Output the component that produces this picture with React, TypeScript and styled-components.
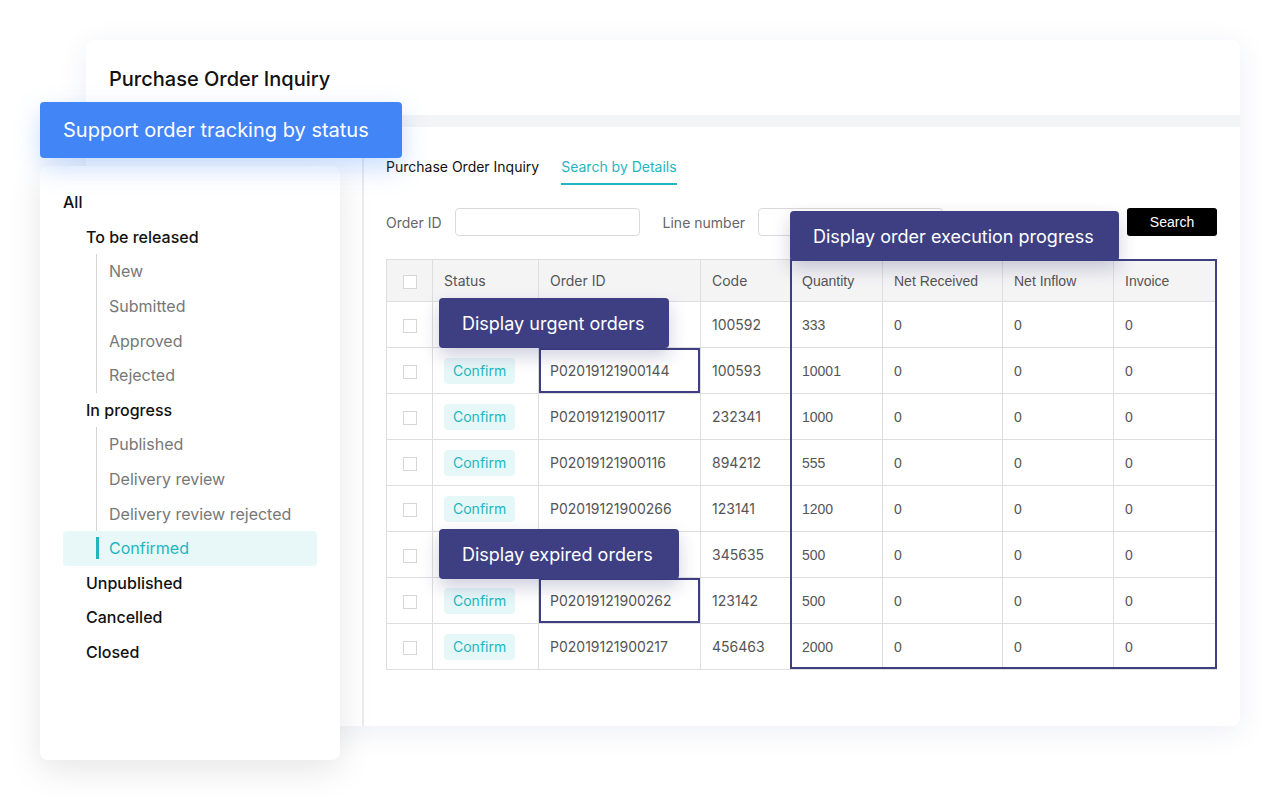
import React from 'react';
import styled, { createGlobalStyle } from 'styled-components';

const GlobalStyle = createGlobalStyle`
  html, body {
    margin: 0;
    padding: 0;
    background: #ffffff;
  }
  body {
    font-family: Inter, "Noto Sans", sans-serif;
    color: #222;
  }
  * {
    box-sizing: border-box;
  }
`;

const NAVY = '#3e3f83';
const TEAL = '#1fb6bf';

const Page = styled.div`
  position: relative;
  width: 1280px;
  height: 800px;
  padding: 40px 0 0 86px;
  overflow: hidden;
`;

const MainCard = styled.div`
  width: 1154px;
  height: 686px;
  background: #fff;
  border-radius: 8px;
  box-shadow: 0 6px 30px rgba(40, 50, 130, 0.08);
  display: flex;
  flex-direction: column;
  overflow: hidden;
`;

const CardHeader = styled.div`
  height: 87px;
  flex-shrink: 0;
  display: flex;
  align-items: center;
  padding: 2px 0 0 23px;
  border-bottom: 12px solid #f3f4f6;
`;

const CardTitle = styled.h1`
  margin: 0;
  font-size: 20px;
  font-weight: 500;
  color: #111;
`;

const CardBody = styled.div`
  flex: 1;
  display: flex;
`;

const SideColumn = styled.div`
  width: 278px;
  flex-shrink: 0;
  border-right: 2px solid #ececee;
`;

const Content = styled.div`
  flex: 1;
  padding: 30px 23px 0 22px;
`;

const Tabs = styled.div`
  display: flex;
  gap: 22px;
`;

const Tab = styled.div<{ $active?: boolean }>`
  font-size: 14px;
  line-height: 20px;
  padding-bottom: 6px;
  color: ${(p) => (p.$active ? TEAL : '#111')};
  border-bottom: 2px solid ${(p) => (p.$active ? TEAL : 'transparent')};
`;

const FilterRow = styled.div`
  display: flex;
  align-items: center;
  margin-top: 23px;
  height: 28px;
`;

const FilterLabel = styled.span`
  font-size: 14px;
  color: #666;
  margin-right: 13px;
`;

const FilterInput = styled.div`
  width: 185px;
  height: 28px;
  border: 1px solid #d9d9d9;
  border-radius: 4px;
  margin-right: 23px;
`;

const Spacer = styled.div`
  flex: 1;
`;

const SearchButton = styled.button`
  width: 90px;
  height: 28px;
  border: none;
  border-radius: 3px;
  background: #000;
  color: #fff;
  font-family: "Liberation Sans", Arial, sans-serif;
  font-size: 14px;
  padding: 0;
`;

const TableWrap = styled.div`
  position: relative;
  margin-top: 23px;
  width: 830px;
`;

const Table = styled.table`
  border-collapse: collapse;
  table-layout: fixed;
  width: 830px;
  font-size: 14px;
`;

const HeadCell = styled.th<{ $arial?: boolean }>`
  height: 42px;
  background: #f4f4f5;
  border: 1px solid #dedede;
  text-align: left;
  font-weight: 400;
  color: #555;
  padding: 0 11px;
  font-family: ${(p) => (p.$arial ? '"Liberation Sans", Arial, sans-serif' : 'inherit')};
`;

const Cell = styled.td<{ $arial?: boolean; $marked?: boolean }>`
  height: 46px;
  border: 1px solid #dedede;
  color: #555;
  padding: 0 11px;
  white-space: nowrap;
  font-family: ${(p) => (p.$arial ? '"Liberation Sans", Arial, sans-serif' : 'inherit')};
  box-shadow: ${(p) => (p.$marked ? `inset 0 0 0 2px ${NAVY}` : 'none')};
`;

const CheckCell = styled.td`
  height: 46px;
  border: 1px solid #dedede;
  text-align: center;
`;

const CheckHead = styled.th`
  height: 42px;
  background: #f4f4f5;
  border: 1px solid #dedede;
  text-align: center;
`;

const Checkbox = styled.span`
  display: inline-block;
  width: 14px;
  height: 14px;
  border: 1px solid #d6d6d6;
  background: #fff;
  vertical-align: middle;
`;

const Badge = styled.span`
  display: inline-block;
  height: 26px;
  line-height: 26px;
  padding: 0 9px;
  border-radius: 4px;
  background: #e6f7f8;
  color: ${TEAL};
`;

const GroupBox = styled.div`
  position: absolute;
  left: 404px;
  top: 0;
  width: 427px;
  height: 410px;
  border: 2px solid ${NAVY};
  pointer-events: none;
`;

const Callout = styled.div<{ $left: number; $top: number; $width: number }>`
  position: absolute;
  left: ${(p) => p.$left}px;
  top: ${(p) => p.$top}px;
  width: ${(p) => p.$width}px;
  height: 50px;
  display: flex;
  align-items: center;
  padding-left: 23px;
  background: ${NAVY};
  color: #fff;
  font-size: 18px;
  border-radius: 4px;
  box-shadow: 0 8px 18px rgba(40, 40, 110, 0.22);
`;

const StatusBanner = styled.div`
  position: absolute;
  left: 40px;
  top: 102px;
  width: 362px;
  height: 56px;
  display: flex;
  align-items: center;
  padding-left: 23px;
  background: #4285f7;
  color: #fff;
  font-size: 20px;
  border-radius: 4px;
  box-shadow: 0 10px 26px rgba(66, 133, 247, 0.28);
  z-index: 2;
`;

const StatusPanel = styled.div`
  position: absolute;
  left: 40px;
  top: 166px;
  width: 300px;
  height: 594px;
  background: #fff;
  border-radius: 8px;
  box-shadow: 0 10px 34px rgba(0, 0, 0, 0.1);
  padding: 19px 23px 0;
  z-index: 1;
`;

const TreeRow = styled.div<{ $level: number; $active?: boolean }>`
  display: flex;
  align-items: center;
  height: 34.6px;
  padding-left: ${(p) => (p.$level === 0 ? 0 : p.$level === 1 ? 23 : 33)}px;
  border-radius: 4px;
  background: ${(p) => (p.$active ? '#e8f8f8' : 'transparent')};
  font-size: 16px;
  font-weight: ${(p) => (p.$level < 2 ? 500 : 400)};
  color: ${(p) => (p.$active ? TEAL : p.$level < 2 ? '#111' : '#777')};
`;

const Rail = styled.span<{ $active?: boolean }>`
  width: ${(p) => (p.$active ? 3 : 1)}px;
  height: ${(p) => (p.$active ? '22px' : '100%')};
  margin-right: ${(p) => (p.$active ? 10 : 12)}px;
  background: ${(p) => (p.$active ? TEAL : '#d4d4d4')};
  flex-shrink: 0;
`;

type TreeItem = { label: string; level: number; active?: boolean };

const tree: TreeItem[] = [
  { label: 'All', level: 0 },
  { label: 'To be released', level: 1 },
  { label: 'New', level: 2 },
  { label: 'Submitted', level: 2 },
  { label: 'Approved', level: 2 },
  { label: 'Rejected', level: 2 },
  { label: 'In progress', level: 1 },
  { label: 'Published', level: 2 },
  { label: 'Delivery review', level: 2 },
  { label: 'Delivery review rejected', level: 2 },
  { label: 'Confirmed', level: 2, active: true },
  { label: 'Unpublished', level: 1 },
  { label: 'Cancelled', level: 1 },
  { label: 'Closed', level: 1 },
];

// rows whose status / order id sit under a callout carry no visible id
type Order = { key: string; id?: string; code: string; qty: string; marked?: boolean };

const orders: Order[] = [
  { key: 'r1', code: '100592', qty: '333' },
  { key: 'r2', id: 'P02019121900144', code: '100593', qty: '10001', marked: true },
  { key: 'r3', id: 'P02019121900117', code: '232341', qty: '1000' },
  { key: 'r4', id: 'P02019121900116', code: '894212', qty: '555' },
  { key: 'r5', id: 'P02019121900266', code: '123141', qty: '1200' },
  { key: 'r6', code: '345635', qty: '500' },
  { key: 'r7', id: 'P02019121900262', code: '123142', qty: '500', marked: true },
  { key: 'r8', id: 'P02019121900217', code: '456463', qty: '2000' },
];

const columns = [46, 106, 162, 90, 92, 120, 111, 103];

const App: React.FC = () => {
  return (
    <>
      <GlobalStyle />
      <Page>
        <MainCard>
          <CardHeader>
            <CardTitle>Purchase Order Inquiry</CardTitle>
          </CardHeader>
          <CardBody>
            <SideColumn />
            <Content>
              <Tabs>
                <Tab>Purchase Order Inquiry</Tab>
                <Tab $active>Search by Details</Tab>
              </Tabs>

              <FilterRow>
                <FilterLabel>Order ID</FilterLabel>
                <FilterInput />
                <FilterLabel>Line number</FilterLabel>
                <FilterInput />
                <Spacer />
                <SearchButton>Search</SearchButton>
              </FilterRow>

              <TableWrap>
                <Table>
                  <colgroup>
                    {columns.map((w, i) => (
                      <col key={i} style={{ width: w }} />
                    ))}
                  </colgroup>
                  <thead>
                    <tr>
                      <CheckHead>
                        <Checkbox />
                      </CheckHead>
                      <HeadCell>Status</HeadCell>
                      <HeadCell>Order ID</HeadCell>
                      <HeadCell>Code</HeadCell>
                      <HeadCell $arial>Quantity</HeadCell>
                      <HeadCell $arial>Net Received</HeadCell>
                      <HeadCell $arial>Net Inflow</HeadCell>
                      <HeadCell $arial>Invoice</HeadCell>
                    </tr>
                  </thead>
                  <tbody>
                    {orders.map((o) => (
                      <tr key={o.key}>
                        <CheckCell>
                          <Checkbox />
                        </CheckCell>
                        <Cell>{o.id && <Badge>Confirm</Badge>}</Cell>
                        <Cell $marked={o.marked}>{o.id}</Cell>
                        <Cell>{o.code}</Cell>
                        <Cell $arial>{o.qty}</Cell>
                        <Cell $arial>0</Cell>
                        <Cell $arial>0</Cell>
                        <Cell $arial>0</Cell>
                      </tr>
                    ))}
                  </tbody>
                </Table>

                <GroupBox />
                <Callout $left={404} $top={-48} $width={329}>
                  Display order execution progress
                </Callout>
                <Callout $left={53} $top={39} $width={230}>
                  Display urgent orders
                </Callout>
                <Callout $left={53} $top={270} $width={240}>
                  Display expired orders
                </Callout>
              </TableWrap>
            </Content>
          </CardBody>
        </MainCard>

        <StatusBanner>Support order tracking by status</StatusBanner>
        <StatusPanel>
          {tree.map((item) => (
            <TreeRow key={item.label} $level={item.level} $active={item.active}>
              {item.level === 2 && <Rail $active={item.active} />}
              {item.label}
            </TreeRow>
          ))}
        </StatusPanel>
      </Page>
    </>
  );
};

export default App;
